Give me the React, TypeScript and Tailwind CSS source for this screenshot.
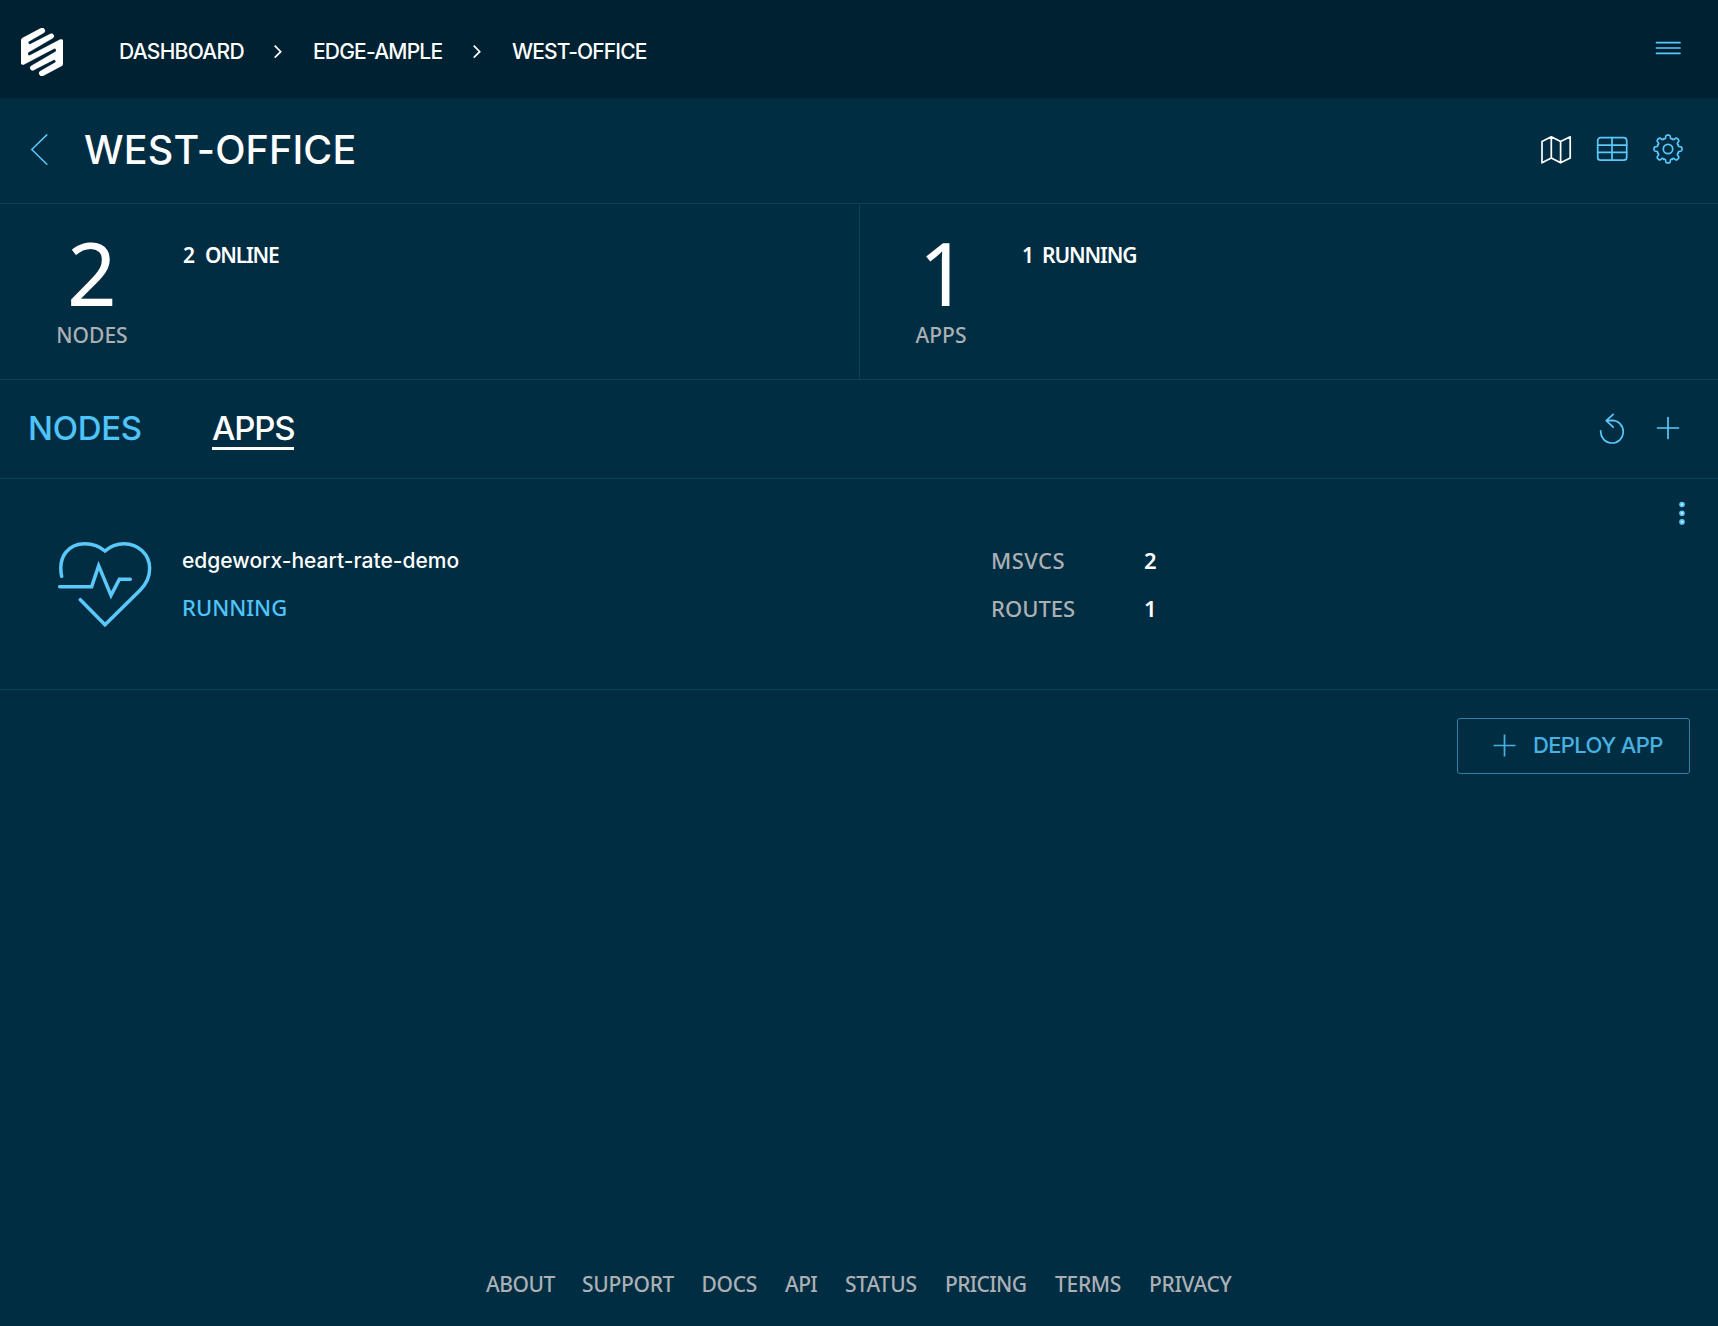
import type { ReactNode } from "react";

const LOGO_HALF =
  "M63 192 L63 121 Q63 116 67 114 L122 85 A8 8 0 0 1 131 99 L88 123.500 A4.500 4.500 0 0 0 91.500 132 L150 102 A7.500 7.500 0 0 1 158 115 L86 157 A5 5 0 0 0 90 166 L180 118.500 Q189 116 189 124 L189 122 Z";

function Logo() {
  return (
    <svg className="h-12 w-[42px]" viewBox="63 84 126 144" fill="#fff" stroke="#fff" strokeWidth="0.6">
      <path d={LOGO_HALF} />
      <path d={LOGO_HALF} transform="rotate(180 126 156)" />
    </svg>
  );
}

function Chevron() {
  return (
    <svg className="h-4 w-[10px]" viewBox="0 0 10 16" fill="none" stroke="#fff" strokeWidth="1.7">
      <path d="M1.700 1.700 L7.700 7.700 L1.700 13.700" />
    </svg>
  );
}

function Icon({ children, color = "#5ac8fa", label }: { children: ReactNode; color?: string; label: string }) {
  return (
    <button aria-label={label} className="size-8">
      <svg className="size-8" viewBox="0 0 32 32" fill="none" stroke={color} strokeWidth="1.7" strokeLinecap="round" strokeLinejoin="round">
        {children}
      </svg>
    </button>
  );
}

function gearPath(teeth: number, outer: number, inner: number) {
  const at = (deg: number, r: number) => {
    const a = (deg * Math.PI) / 180;
    return `${(16 + r * Math.cos(a)).toFixed(2)} ${(16 + r * Math.sin(a)).toFixed(2)}`;
  };
  let d = "";
  for (let i = 0; i < teeth; i++) {
    const c = (i * 360) / teeth - 90;
    d += `${i === 0 ? "M" : "L"}${at(c - 13, inner)} L${at(c - 11.5, outer - 2)} Q${at(c - 10, outer)} ${at(c - 4, outer)} L${at(c + 4, outer)} Q${at(c + 10, outer)} ${at(c + 11.5, outer - 2)} L${at(c + 13, inner)} Q${at(c + 17, inner - 1)} ${at(c + 22.5, inner)} Q${at(c + 28, inner - 1)} ${at(c + 32, inner)} `;
  }
  return d + "Z";
}
const GEAR = gearPath(8, 14, 11.2);

function Stat({ value, label, count, state, className, valueClass, countClass, stateClass }: {
  value: string; label: string; count: string; state: string; className: string; valueClass: string; countClass: string; stateClass: string;
}) {
  return (
    <div className={`flex h-[175px] ${className}`}>
      <div className="flex w-[100px] flex-col items-center">
        <div className={`mt-[26px] h-[87px] text-[87px] leading-[84px] font-normal ${valueClass}`}>{value}</div>
        <div className="mt-[3px] text-[21px] leading-[30px] text-[#abb0b5]">{label}</div>
      </div>
      <div className="mt-[36px] flex text-[21px] leading-[30px] font-semibold">
        <span className={countClass}>{count}</span>
        <span className={stateClass}>{state}</span>
      </div>
    </div>
  );
}

const links: [string, string][] = [
  ["ABOUT", "w-[96px] tracking-[-0.5px]"],
  ["SUPPORT", "w-[119.500px] tracking-[-0.3px]"],
  ["DOCS", "w-[83.500px] tracking-[-0.3px]"],
  ["API", "w-[60px] tracking-[-0.6px]"],
  ["STATUS", "w-[100px] tracking-[-0.2px]"],
  ["PRICING", "w-[110px] tracking-[-0.65px]"],
  ["TERMS", "w-[94px] tracking-[-0.3px]"],
  ["PRIVACY", "w-[84px] tracking-[-0.3px]"],
];

export default function App() {
  return (
    <div className="flex min-h-screen flex-col bg-[#002d42] font-['Noto_Sans',sans-serif] font-medium text-white">
      <header className="flex h-[98px] items-center bg-[#002131] pr-[34px] pl-[21px] font-['Inter',sans-serif]">
        <div className="mt-[6px]"><Logo /></div>
        <nav className="mt-[6px] ml-[56px] flex items-center text-[21px] leading-8">
          <a className="w-[154px] tracking-[-0.7px]">DASHBOARD</a>
          <Chevron />
          <a className="ml-[30px] w-[159px] tracking-[-0.8px]">EDGE-AMPLE</a>
          <Chevron />
          <a className="ml-[30px] tracking-[-0.85px]">WEST-OFFICE</a>
        </nav>
        <div className="ml-auto h-8">
          <Icon label="Menu">
            <path d="M4.500 9.700 H28 M4.500 15 H28 M4.500 20.300 H28" />
          </Icon>
        </div>
      </header>

      <section className="flex h-[106px] items-center border-b border-[#0d405b] pr-[34px] pl-[30px]">
        <svg className="mt-[-2px] h-8 w-[18px]" viewBox="0 0 18 32" fill="none" stroke="#5ac8fa" strokeWidth="1.5" strokeLinecap="round">
          <path d="M16.800 0.900 L1.800 15.500 L16.800 30.200" />
        </svg>
        <h1 className="mt-[-2px] ml-[36px] font-['Inter',sans-serif] text-[39.500px] leading-[48px] font-[450] tracking-[0.15px]">WEST-OFFICE</h1>
        <div className="mt-[-3px] ml-auto flex gap-6">
          <Icon label="Map" color="#fff">
            <path d="M2 7.300 L11.300 2.500 L20.600 7.300 L30.200 2.500 V23.800 L20.600 28.500 L11.300 23.800 L2 28.500 Z M11.300 2.500 V23.800 M20.600 7.300 V28.500" transform="translate(0 1.300)" />
          </Icon>
          <Icon label="Table">
            <rect x="1.700" y="4.700" width="29" height="22.500" rx="3" />
            <path d="M16 4.700 V27.200 M1.700 12.200 H30.700 M1.700 19.300 H30.700" />
          </Icon>
          <Icon label="Settings">
            <path d={GEAR} />
            <circle cx="16" cy="16" r="4.700" />
          </Icon>
        </div>
      </section>

      <section className="grid grid-cols-[859px_859px] border-b border-[#0d405b]">
        <Stat value="2" label="NODES" count="2" state="ONLINE" className="pl-[42px]" valueClass="" countClass="ml-[41px] w-[22px]" stateClass="tracking-[-1.200px]" />
        <Stat value="1" label="APPS" count="1" state="RUNNING" className="border-l border-[#0d405b] pl-[31px]" valueClass="pl-[5px]" countClass="ml-[31px] w-[20px]" stateClass="tracking-[-1.100px]" />
      </section>

      <section className="flex h-[99px] items-center border-b border-[#0d405b] pr-[34px] pl-[28px] font-['Inter',sans-serif] text-[33px] leading-[38px]">
        <a className="mt-[-2px] w-[184px] tracking-[-0.3px] text-[#4fc4fa]">NODES</a>
        <a className="mt-[-2px] mb-[-3px] border-b-[3px] border-white tracking-[-1.200px]">APPS</a>
        <div className="mt-[-2px] ml-auto flex gap-6">
          <Icon label="Refresh">
            <path d="M4.700 18.800 A11.300 11.300 0 1 0 16 8.400 L10.200 8.600 M17.200 2.400 L10.200 8.600 L17.200 15.200" />
          </Icon>
          <Icon label="Add">
            <path d="M16 5.500 V26.500 M5.500 16 H26.500" />
          </Icon>
        </div>
      </section>

      <section className="flex h-[211px] border-b border-[#0d405b] pr-[29px] pl-[58px]">
        <svg className="mt-[62px] h-[88px] w-[96px]" viewBox="174 123 288 264" fill="none" stroke="#5ac8fa" strokeWidth="10.5" strokeLinecap="round">
          <path d="M185 229 C173 170 205 131 255 131 C277 131 298 138 315 153 C331 138 352 131 373 131 C414 131 449 163 449 205 C449 232 439 252 421 270 L315 374 L241 299" />
          <path d="M179 260 H275 L296 197 L333 286 L358 238 H391" strokeMiterlimit="10" />
        </svg>
        <div className="ml-[28px] w-[809px]">
          <div className="mt-[67px] font-['Inter',sans-serif] text-[21px] leading-[30px]">edgeworx-heart-rate-demo</div>
          <div className="mt-[16px] text-[22px] leading-[30px] text-[#4fc4fa]">RUNNING</div>
        </div>
        <dl className="mt-[66px] grid h-[96px] grid-cols-[153px_40px] grid-rows-[48px_48px] text-[22px] leading-[30px]">
          <dt className="tracking-[0.5px] text-[#abb0b5]">MSVCS</dt>
          <dd className="font-semibold">2</dd>
          <dt className="text-[#abb0b5]">ROUTES</dt>
          <dd className="font-semibold">1</dd>
        </dl>
        <button aria-label="More actions" className="mt-[20px] ml-auto h-7 w-[14px]">
          <svg className="h-7 w-[14px]" viewBox="0 0 14 28">
            {[5.5, 14.2, 22.9].map((y) => (
              <g key={y}>
                <circle cx="7" cy={y} r="2.800" fill="#5ac8fa" />
                <circle cx="7" cy={y} r="1.100" fill="#d5f1ff" />
              </g>
            ))}
          </svg>
        </button>
      </section>

      <div className="flex justify-end pt-[28px] pr-[28px]">
        <button className="flex h-14 w-[233px] items-center rounded-[3px] border border-[#3280a6] pb-[2px] pl-[35px] font-['Inter',sans-serif] text-[22px] tracking-[-0.65px] text-[#47b1e1]">
          <svg className="mt-[2px] size-6" viewBox="0 0 24 24" fill="none" stroke="#47b1e1" strokeWidth="1.7">
            <path d="M11.500 0.500 V22.500 M0.500 11.500 H22.500" />
          </svg>
          <span className="ml-[16px]">DEPLOY APP</span>
        </button>
      </div>

      <footer className="mt-auto mb-[27px] flex pl-[486px] text-[21px] leading-[30px] text-[#abb0b5]">
        {links.map(([text, cls]) => (
          <a key={text} className={cls}>{text}</a>
        ))}
      </footer>
    </div>
  );
}
